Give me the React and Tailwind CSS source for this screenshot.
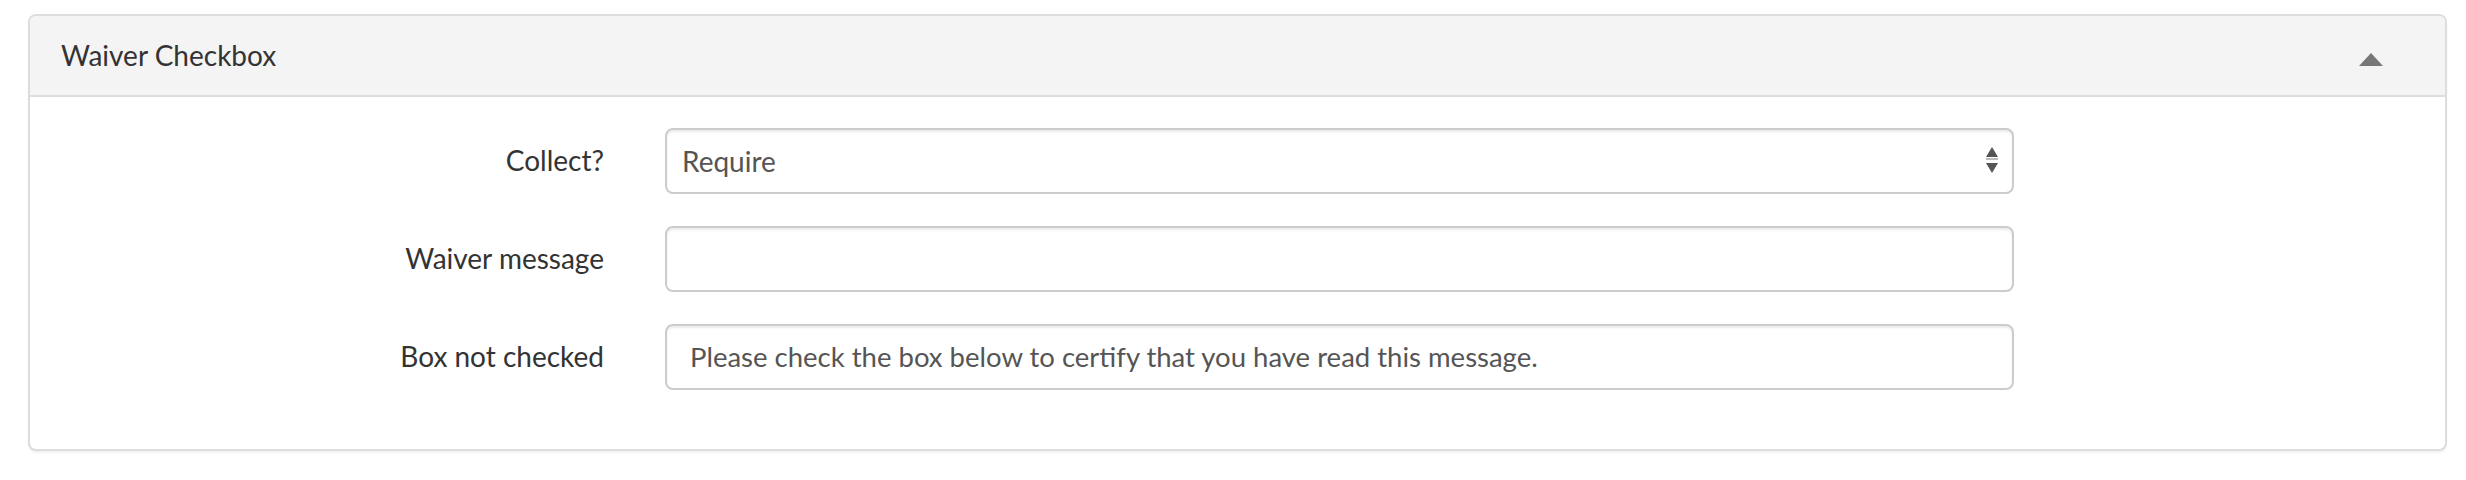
import { useState } from 'react';

const fields = [
  { key: 'message', label: 'Waiver message', value: '' },
  {
    key: 'unchecked',
    label: 'Box not checked',
    value: 'Please check the box below to certify that you have read this message.',
  },
];

const SortArrows = () => (
  <svg width="12" height="28" viewBox="0 0 12 28" className="block">
    <path d="M6 0 L12 10 L0 10 Z" fill="#555555" />
    <rect x="0" y="11" width="12" height="2" fill="#bbbbbb" />
    <path d="M0 16 L12 16 L6 26 Z" fill="#555555" />
  </svg>
);

const WaiverPanel = () => {
  const [open, setOpen] = useState(true);
  const [collect, setCollect] = useState('require');
  const [values, setValues] = useState(
    Object.fromEntries(fields.map((f) => [f.key, f.value]))
  );

  return (
    <div className="ml-[28px] mt-[14px] w-[2419px] rounded-[8px] border-2 border-[#dddddd] bg-white shadow-[0_2px_2px_rgba(0,0,0,0.05)]">
      <button
        type="button"
        onClick={() => setOpen(!open)}
        className="flex h-[81px] w-full items-center justify-between rounded-t-[6px] border-b-2 border-[#dddddd] bg-[#f4f4f4] pb-[2px] pl-[31px] pr-[62px] text-left"
      >
        <span className="text-[28px] text-[#333333]">Waiver Checkbox</span>
        <svg width="24" height="13" viewBox="0 0 24 13" className="mt-[10px] block">
          <path d={open ? 'M12 0 L24 13 L0 13 Z' : 'M0 0 L24 0 L12 13 Z'} fill="#777777" />
        </svg>
      </button>

      {open && (
        <div className="flex flex-col gap-[32px] pb-[59px] pt-[31px]">
          <div className="flex items-center">
            <label className="w-[574px] shrink-0 pb-[2px] text-right text-[28px] text-[#333333]">Collect?</label>
            <div className="relative ml-[61px] w-[1349px]">
              <select
                value={collect}
                onChange={(e) => setCollect(e.target.value)}
                className="h-[66px] w-full appearance-none rounded-[8px] border-2 border-[#cccccc] bg-white pl-[15px] text-[28px] text-[#555555] shadow-[inset_0_2px_2px_rgba(0,0,0,0.075)] outline-none"
              >
                <option value="require">Require</option>
                <option value="optional">Optional</option>
                <option value="none">Don't collect</option>
              </select>
              <div className="pointer-events-none absolute right-[16px] top-[19px]">
                <SortArrows />
              </div>
            </div>
          </div>

          {fields.map((f) => (
            <div key={f.key} className="flex items-center">
              <label className="w-[574px] shrink-0 pb-[2px] text-right text-[28px] text-[#333333]">{f.label}</label>
              <input
                type="text"
                value={values[f.key]}
                onChange={(e) => setValues({ ...values, [f.key]: e.target.value })}
                className="ml-[61px] h-[66px] w-[1349px] rounded-[8px] border-2 border-[#cccccc] bg-white px-[23px] pb-[2px] text-[27.5px] text-[#555555] shadow-[inset_0_2px_2px_rgba(0,0,0,0.075)] outline-none"
              />
            </div>
          ))}
        </div>
      )}
    </div>
  );
};

export default function App() {
  return (
    <div className="min-h-[480px] bg-white font-['Lato','Liberation_Sans',sans-serif]">
      <WaiverPanel />
    </div>
  );
}
